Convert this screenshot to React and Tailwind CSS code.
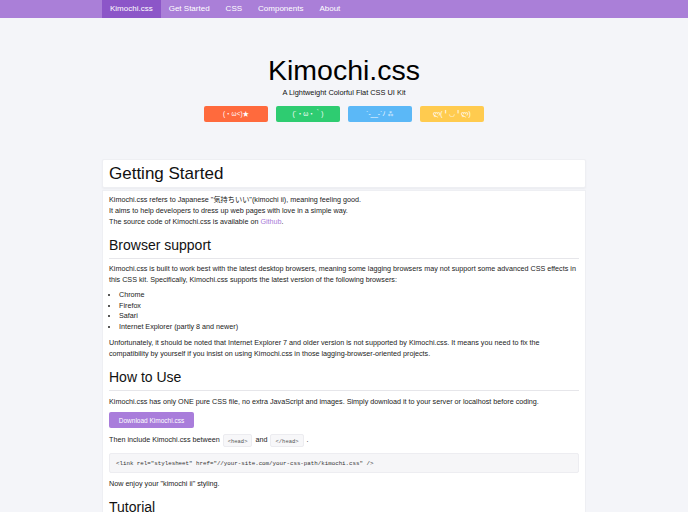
import React from 'react';

const navItems = ['Kimochi.css', 'Get Started', 'CSS', 'Components', 'About'];

const faces = [
  { text: '(・ω<)★', cls: 'bg-[#ff6a3d]' },
  { text: '(´・ω・｀)', cls: 'bg-[#2ecc71]' },
  { text: '´-__-`ﾉ ⁂', cls: 'bg-[#5bb8f7]' },
  { text: 'ლ(╹◡╹ლ)', cls: 'bg-[#ffcb4f]' },
];

const browsers = ['Chrome', 'Firefox', 'Safari', 'Internet Explorer (partly 8 and newer)'];

function SectionTitle({ children }) {
  return (
    <h2 className="mt-[10px] text-[14px] leading-[17px] text-[#111] pb-[4px] border-b border-[#e6e6ea]">
      {children}
    </h2>
  );
}

function Chip({ children }) {
  return (
    <code className="inline-block mx-[3px] px-[4px] h-[13px] leading-[13px] align-middle bg-[#f7f7f9] border border-[#ececf0] rounded-[2px] text-[5.5px] font-['Liberation_Mono',monospace] text-[#555]">
      {children}
    </code>
  );
}

export default function App() {
  return (
    <div className="min-h-[512px] bg-[#f4f5f9] font-['Liberation_Sans','Noto_Sans_CJK_JP',Arial,sans-serif] text-[#222]">
      {/* Nav */}
      <nav className="h-[18px] bg-[#aa7fd8]">
        <div className="w-[484px] mx-auto flex h-full">
          {navItems.map((item, i) => (
            <a
              key={item}
              className={`px-[8px] flex items-center text-[8px] text-white ${i === 0 ? 'bg-[#8c56c8]' : ''}`}
            >
              {item}
            </a>
          ))}
        </div>
      </nav>

      {/* Hero */}
      <header className="flex flex-col items-center pt-[38px]">
        <h1 className="text-[28.5px] leading-[28px] text-black">Kimochi.css</h1>
        <p className="mt-[4px] text-[7.4px] leading-[10px] text-[#111]">A Lightweight Colorful Flat CSS UI Kit</p>
        <div className="mt-[8px] flex gap-[8px]">
          {faces.map((f) => (
            <button
              key={f.text}
              className={`w-[64px] h-[16px] rounded-[2px] text-white text-[6.5px] flex items-center justify-center ${f.cls}`}
            >
              {f.text}
            </button>
          ))}
        </div>
      </header>

      {/* Content */}
      <main className="w-[484px] mx-auto mt-[37px]">
        <div className="h-[29px] flex items-center px-[6px] bg-white border border-[#eeeff3] rounded-[2px] shadow-[0_1px_2px_rgba(0,0,0,0.04)]">
          <h1 className="text-[17px] text-[#111]">Getting Started</h1>
        </div>

        <section className="mt-[2px] bg-white border border-[#eeeff3] px-[6px] pt-[3px] pb-[20px] text-[7.2px] leading-[11px] text-[#222]">
          <p>
            Kimochi.css refers to Japanese "気持ちいい"(kimochi ii), meaning feeling good.
            <br />
            It aims to help developers to dress up web pages with love in a simple way.
            <br />
            The source code of Kimochi.css is available on <a className="text-[#a77bd8]">Github</a>.
          </p>

          <SectionTitle>Browser support</SectionTitle>
          <p className="mt-[4px]">
            Kimochi.css is built to work best with the latest desktop browsers, meaning some lagging browsers may not support some advanced CSS effects in this CSS kit. Specifically, Kimochi.css supports the latest version of the following browsers:
          </p>
          <ul className="mt-[5px] list-disc pl-[10px] leading-[10.6px]">
            {browsers.map((b) => (
              <li key={b}>{b}</li>
            ))}
          </ul>
          <p className="mt-[5px]">
            Unfortunately, it should be noted that Internet Explorer 7 and older version is not supported by Kimochi.css. It means you need to fix the compatibility by yourself if you insist on using Kimochi.css in those lagging-browser-oriented projects.
          </p>

          <SectionTitle>How to Use</SectionTitle>
          <p className="mt-[5px]">
            Kimochi.css has only ONE pure CSS file, no extra JavaScript and images. Simply download it to your server or localhost before coding.
          </p>
          <button className="mt-[5px] w-[85px] h-[16px] rounded-[2px] bg-[#a97ddb] text-white text-[6.5px] flex items-center justify-center">
            Download Kimochi.css
          </button>
          <p className="mt-[6px]">
            Then include Kimochi.css between<Chip>&lt;head&gt;</Chip>and<Chip>&lt;/head&gt;</Chip>.
          </p>
          <pre className="mt-[6px] h-[20px] flex items-center px-[6px] bg-[#f6f6f8] border border-[#ededf1] rounded-[2px] text-[5.8px] font-['Liberation_Mono',monospace] text-[#333]">
            {'<link rel="stylesheet" href="//your-site.com/your-css-path/kimochi.css" />'}
          </pre>
          <p className="mt-[5px]">Now enjoy your "kimochi ii" styling.</p>

          <h2 className="mt-[10px] text-[14px] leading-[17px] text-[#111]">Tutorial</h2>
        </section>
      </main>
    </div>
  );
}
